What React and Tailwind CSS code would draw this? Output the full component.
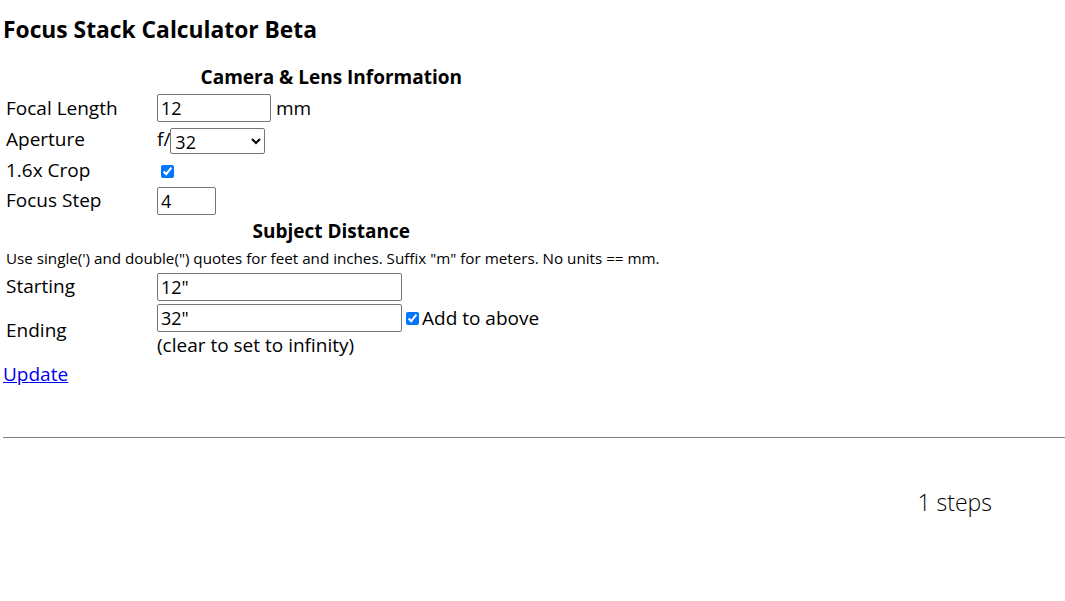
import React from 'react';

// Small helpers so the form rows stay readable
function TextField({ value, className = "" }) {
  return (
    <input
      type="text"
      defaultValue={value}
      className={`h-[28px] border border-[#767676] rounded-[2px] px-[3px] text-[18px] text-black bg-white ${className}`}
    />
  );
}

function Label({ children }) {
  return <td className="w-[154px] pl-[3px] pr-0 text-[19px] whitespace-nowrap align-middle">{children}</td>;
}

export default function App() {
  return (
    <div className="min-h-[601px] bg-white text-black font-['Open_Sans',sans-serif] pl-[3px]">
      <h1 className="text-[22.8px] font-bold leading-[30px] pt-[15px]">Focus Stack Calculator Beta</h1>

      <table className="mt-[20px] border-collapse">
        <tbody>
          <tr className="h-[28px]">
            <th colSpan={2} className="text-[19px] font-bold text-center align-top leading-[24px]">
              Camera &amp; Lens Information
            </th>
          </tr>
          <tr className="h-[31px]">
            <Label>Focal Length</Label>
            <td className="align-middle">
              <TextField value="12" className="w-[114px]" />
              <span className="text-[19px] ml-[5px]">mm</span>
            </td>
          </tr>
          <tr className="h-[31px]">
            <Label>Aperture</Label>
            <td className="align-middle text-[19px]">
              f/
              <select
                defaultValue="32"
                className="h-[26px] w-[95px] border border-[#767676] rounded-[2px] text-[18px] leading-[20px] bg-white align-middle"
              >
                <option>2.8</option>
                <option>4</option>
                <option>5.6</option>
                <option>8</option>
                <option>11</option>
                <option>16</option>
                <option>22</option>
                <option>32</option>
              </select>
            </td>
          </tr>
          <tr className="h-[30px]">
            <Label>1.6x Crop</Label>
            <td className="align-middle">
              <input type="checkbox" defaultChecked className="ml-[4px] w-[13px] h-[13px] align-middle" />
            </td>
          </tr>
          <tr className="h-[31px]">
            <Label>Focus Step</Label>
            <td className="align-middle">
              <TextField value="4" className="w-[59px]" />
            </td>
          </tr>
          <tr className="h-[30px]">
            <th colSpan={2} className="text-[19px] font-bold text-center align-middle">
              Subject Distance
            </th>
          </tr>
          <tr className="h-[24px]">
            <td colSpan={2} className="pl-[3px] text-[15.2px] align-middle whitespace-nowrap">
              Use single(') and double(") quotes for feet and inches. Suffix "m" for meters. No units == mm.
            </td>
          </tr>
          <tr className="h-[33px]">
            <Label>Starting</Label>
            <td className="align-middle">
              <TextField value={'12"'} className="w-[245px]" />
            </td>
          </tr>
          <tr>
            <Label>Ending</Label>
            <td className="align-middle pt-[1px]">
              <div className="flex items-center">
                <TextField value={'32"'} className="w-[245px]" />
                <input type="checkbox" defaultChecked className="ml-[4px] w-[13px] h-[13px]" />
                <span className="text-[19px] ml-[3px]">Add to above</span>
              </div>
              <div className="text-[19px] leading-[24px]">(clear to set to infinity)</div>
            </td>
          </tr>
        </tbody>
      </table>

      <a href="#" className="block mt-[3px] text-[19px] text-[#0000ee] underline w-fit">Update</a>

      <hr className="mt-[49px] border-t border-[#808080]" />

      <div className="flex justify-end pr-[73px] pt-[47px]">
        <span className="text-[23px] font-light">1 steps</span>
      </div>
    </div>
  );
}
